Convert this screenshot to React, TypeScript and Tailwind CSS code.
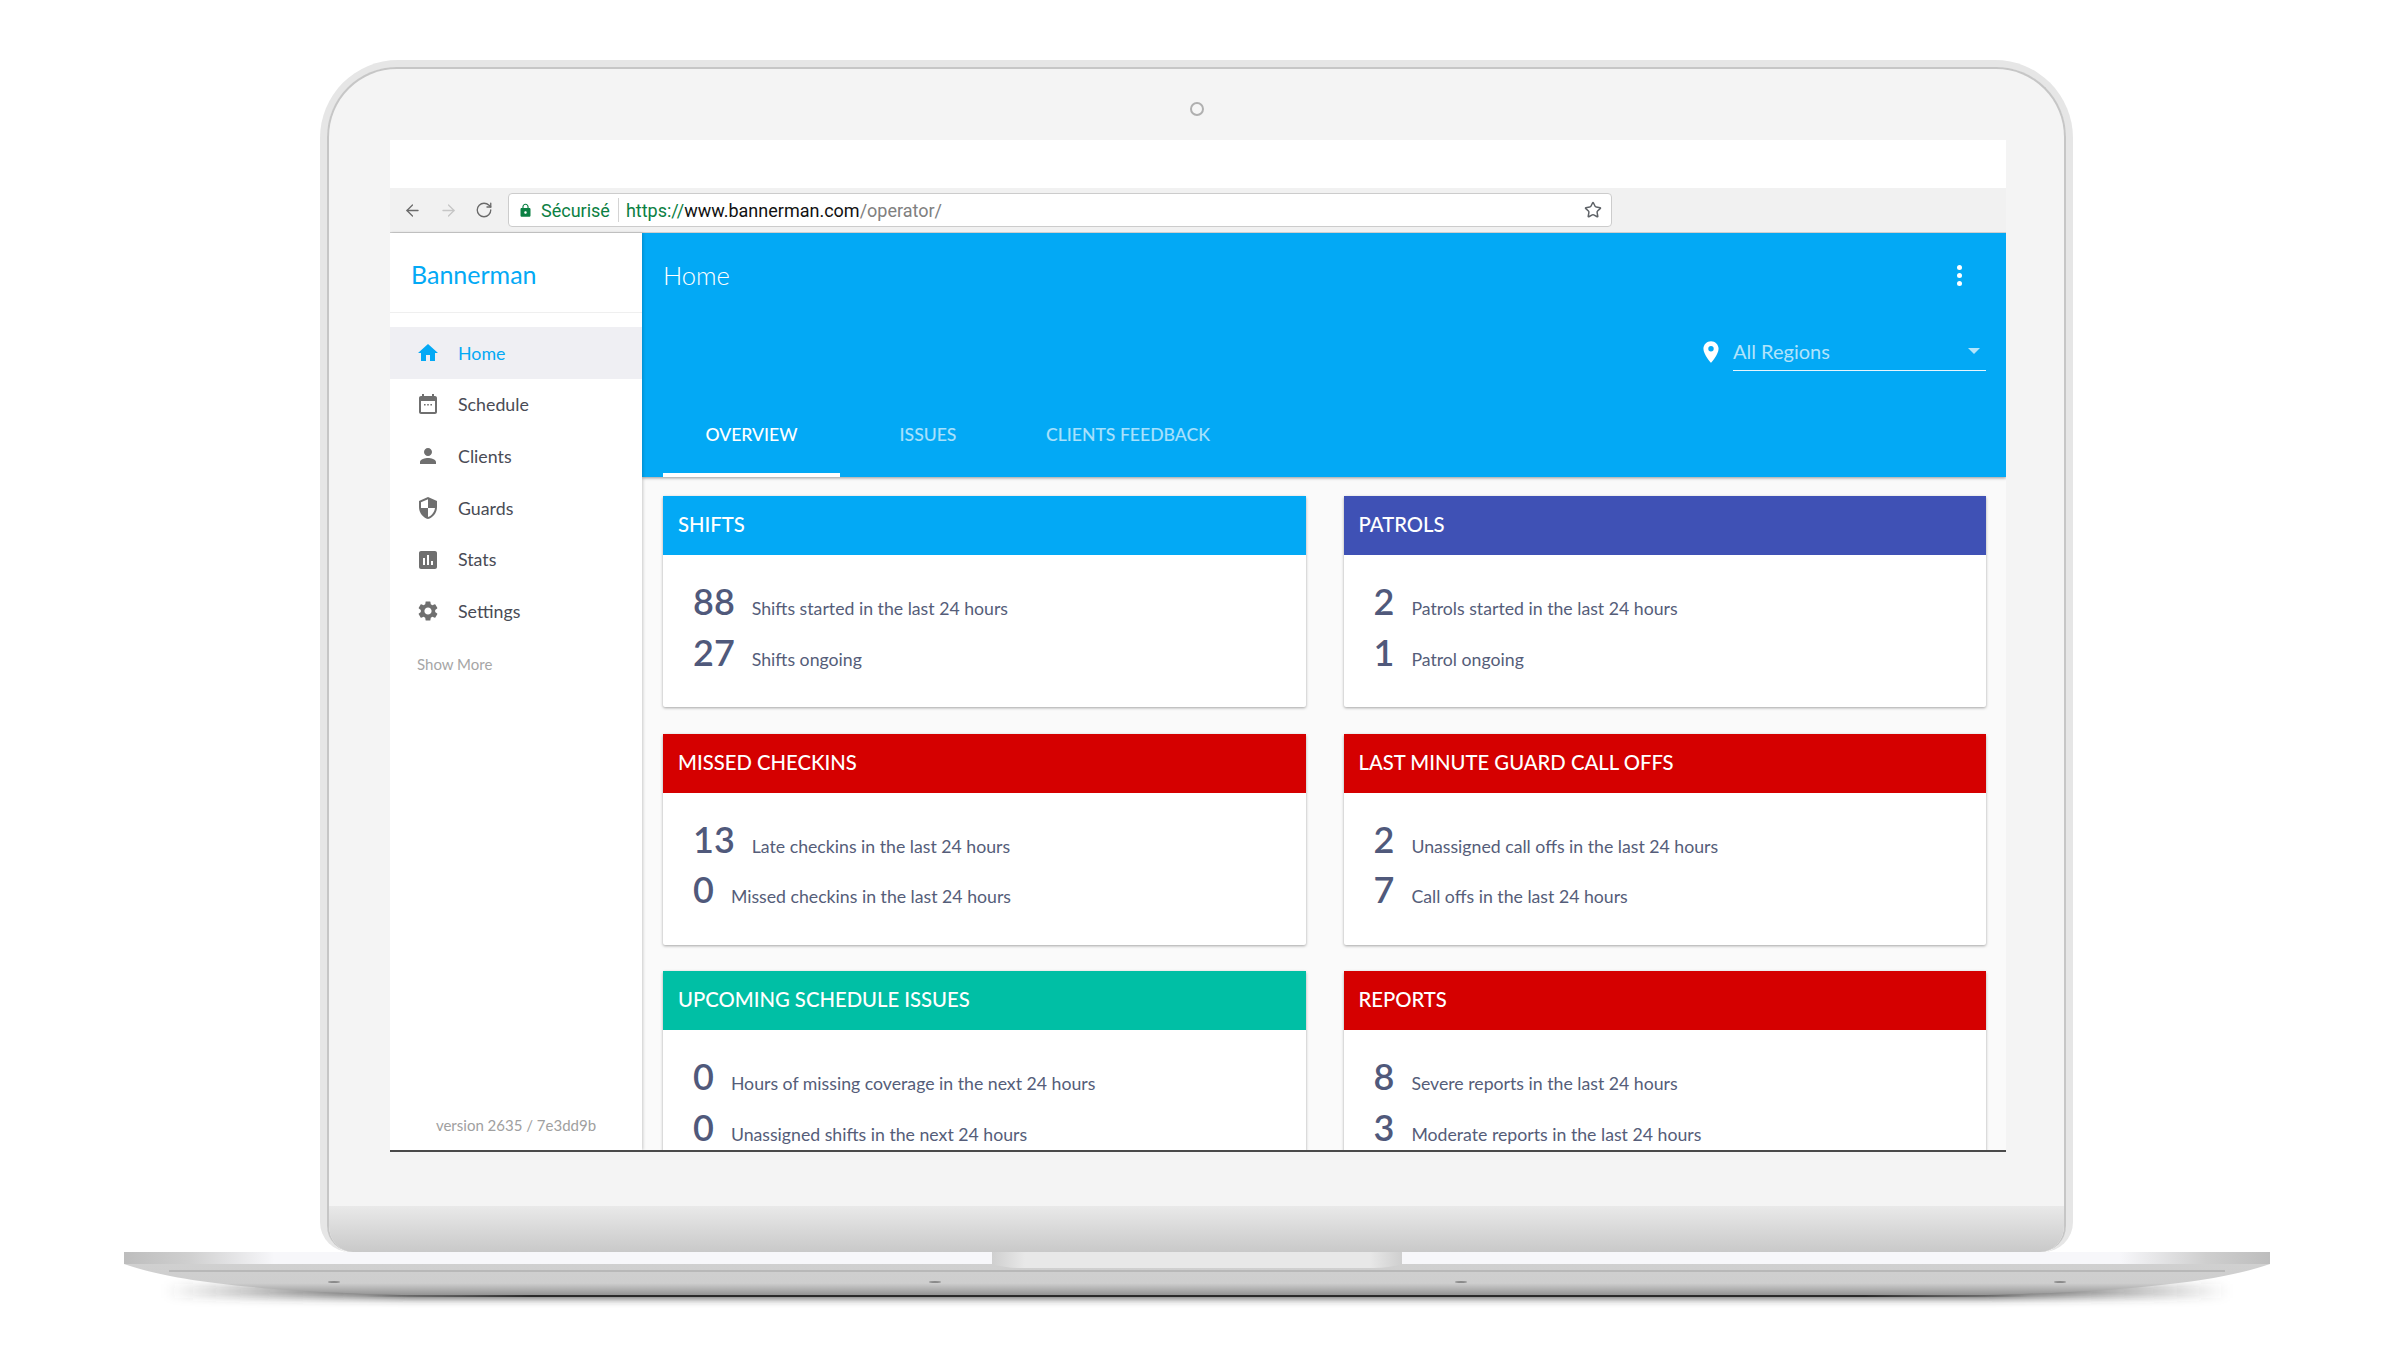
import React from 'react';
import { ArrowLeft, ArrowRight, RotateCw, Star } from 'lucide-react';
import { MdHome, MdPerson, MdSecurity, MdAssessment, MdSettings, MdPlace, MdLock } from 'react-icons/md';

const CalendarIcon = () => (
  <svg viewBox="0 0 24 24" className="w-6 h-6 fill-current">
    <path d="M19 3h-1V1h-2v2H8V1H6v2H5c-1.1 0-2 .9-2 2v14c0 1.1.9 2 2 2h14c1.1 0 2-.9 2-2V5c0-1.1-.9-2-2-2zm0 16H5V8h14v11z" />
    <path d="M8 11h1.6v1.6H8zM11.2 11h1.6v1.6h-1.6zM14.4 11H16v1.6h-1.6z" />
  </svg>
);

const navItems = [
  { label: 'Home', icon: <MdHome className="w-6 h-6" />, active: true },
  { label: 'Schedule', icon: <CalendarIcon /> },
  { label: 'Clients', icon: <MdPerson className="w-6 h-6" /> },
  { label: 'Guards', icon: <MdSecurity className="w-6 h-6" /> },
  { label: 'Stats', icon: <MdAssessment className="w-6 h-6" /> },
  { label: 'Settings', icon: <MdSettings className="w-6 h-6" /> },
];

const cards = [
  { title: 'SHIFTS', color: 'bg-[#03a9f5]', rows: [['88', 'Shifts started in the last 24 hours'], ['27', 'Shifts ongoing']] },
  { title: 'PATROLS', color: 'bg-[#3f51b5]', rows: [['2', 'Patrols started in the last 24 hours'], ['1', 'Patrol ongoing']] },
  { title: 'MISSED CHECKINS', color: 'bg-[#d50000]', rows: [['13', 'Late checkins in the last 24 hours'], ['0', 'Missed checkins in the last 24 hours']] },
  { title: 'LAST MINUTE GUARD CALL OFFS', color: 'bg-[#d50000]', rows: [['2', 'Unassigned call offs in the last 24 hours'], ['7', 'Call offs in the last 24 hours']] },
  { title: 'UPCOMING SCHEDULE ISSUES', color: 'bg-[#00bfa5]', rows: [['0', 'Hours of missing coverage in the next 24 hours'], ['0', 'Unassigned shifts in the next 24 hours']] },
  { title: 'REPORTS', color: 'bg-[#d50000]', rows: [['8', 'Severe reports in the last 24 hours'], ['3', 'Moderate reports in the last 24 hours']] },
];

const BrowserBar = () => (
  <div className="h-[45px] shrink-0 bg-[#f1f1f1] border-b border-[#cfcfcf] flex items-center pl-[13px]">
    <ArrowLeft className="w-[19px] h-[19px] text-[#6a6a6a]" strokeWidth={1.6} />
    <ArrowRight className="w-[19px] h-[19px] text-[#c6c6c6] ml-[17px]" strokeWidth={1.6} />
    <RotateCw className="w-[18px] h-[18px] text-[#6a6a6a] ml-[17px]" strokeWidth={1.8} />
    <div className="ml-[15px] w-[1104px] h-[34px] bg-white border border-[#cccccc] rounded-[4px] flex items-center pl-[9px] pr-[9px] font-['Roboto',sans-serif] text-[18px]">
      <MdLock className="w-[15px] h-[15px] text-[#0b8043]" />
      <span className="ml-[8px] text-[#0b8043]">Sécurisé</span>
      <span className="ml-[8px] w-px h-[24px] bg-[#d4d4d4]" />
      <span className="ml-[7px] text-[#0b8043]">https://</span>
      <span className="text-[#111111]">www.bannerman.com</span>
      <span className="text-[#808080]">/operator/</span>
      <Star className="ml-auto w-[18px] h-[18px] text-[#5f6368]" strokeWidth={2} />
    </div>
  </div>
);

const Sidebar = () => (
  <aside className="w-[252px] shrink-0 bg-white flex flex-col relative z-10 shadow-[1px_0_3px_rgba(0,0,0,0.2)]">
    <div className="h-[80px] shrink-0 border-b border-[#efefef] flex items-center pl-[21px] pt-[4px] text-[25px] text-[#03a9f5]">Bannerman</div>
    <nav className="mt-[14px]">
      {navItems.map((item) => (
        <div
          key={item.label}
          className={`h-[51.7px] flex items-center pl-[26px] gap-[18px] text-[17.8px] ${item.active ? 'bg-[#efeff3] text-[#03a9f5]' : 'text-[#494b55]'}`}
        >
          <span className={item.active ? 'text-[#03a9f5]' : 'text-[#6f6f6f]'}>{item.icon}</span>
          {item.label}
        </div>
      ))}
    </nav>
    <div className="mt-[17px] pl-[27px] text-[15px] leading-[20px] text-[#a6a6a6]">Show More</div>
    <div className="mt-auto pb-[15px] text-center text-[15px] leading-[20px] text-[#a0a0a0]">version 2635 / 7e3dd9b</div>
  </aside>
);

const Header = () => (
  <header className="h-[244px] shrink-0 bg-[#03a9f5] text-white pl-[21px] pr-[20px] shadow-[0_1px_3px_rgba(0,0,0,0.4)] relative z-[5]">
    <div className="h-[84px] flex items-center justify-between pr-[24px]">
      <span className="text-[25.5px] font-light">Home</span>
      <div className="flex flex-col gap-[3px]">
        <span className="w-[5px] h-[5px] rounded-full bg-white" />
        <span className="w-[5px] h-[5px] rounded-full bg-white" />
        <span className="w-[5px] h-[5px] rounded-full bg-white" />
      </div>
    </div>
    <div className="h-[79px] pt-[17px] flex items-start justify-end">
      <MdPlace className="w-[26px] h-[28px] mr-[9px] mt-[4px]" />
      <div className="w-[253px] h-[37px] pb-[3px] border-b border-white/90 flex items-center justify-between pr-[6px] text-[20px] text-white/70">
        All Regions
        <span className="w-0 h-0 border-x-[6px] border-x-transparent border-t-[6px] border-t-white/70" />
      </div>
    </div>
    <div className="flex h-[81px] text-[17.6px] font-medium">
      <div className="w-[177px] flex items-center justify-center pt-[2px] border-b-4 border-white">OVERVIEW</div>
      <div className="w-[176px] flex items-center justify-center pt-[2px] border-b-4 border-transparent text-white/65">ISSUES</div>
      <div className="w-[224px] flex items-center justify-center pt-[2px] border-b-4 border-transparent text-white/65">CLIENTS FEEDBACK</div>
    </div>
  </header>
);

const Card = ({ title, color, rows }: { title: string; color: string; rows: string[][] }) => (
  <section className="h-[211px] bg-white rounded-[2px] shadow-[0_1px_3px_rgba(0,0,0,0.35)]">
    <div className={`h-[59px] ${color} text-white text-[20.3px] font-medium flex items-center pl-[15px] pb-[2px]`}>{title}</div>
    <div className="pt-[21px] pl-[30px]">
      {rows.map(([n, text]) => (
        <div key={text} className="h-[50.5px] flex items-baseline gap-[17px] text-[#555d79]">
          <span className="text-[36px] leading-[50px] font-semibold text-[#50597b]">{n}</span>
          <span className="text-[17.7px]">{text}</span>
        </div>
      ))}
    </div>
  </section>
);

const LaptopBase = () => (
  <svg viewBox="0 0 2146 60" className="ml-[124px] block w-[2146px] h-[60px]">
    <defs>
      <linearGradient id="strip" x1="0" x2="1" y1="0" y2="0">
        <stop offset="0" stopColor="#bdbdbd" />
        <stop offset="0.03" stopColor="#cfcfcf" />
        <stop offset="0.07" stopColor="#f7f7fa" />
        <stop offset="0.93" stopColor="#f7f7fa" />
        <stop offset="0.97" stopColor="#cfcfcf" />
        <stop offset="1" stopColor="#bdbdbd" />
      </linearGradient>
      <linearGradient id="body" x1="0" x2="0" y1="0" y2="1">
        <stop offset="0" stopColor="#d0d0d0" />
        <stop offset="0.6" stopColor="#cecece" />
        <stop offset="1" stopColor="#8f8f8f" />
      </linearGradient>
      <linearGradient id="notch" x1="0" x2="1" y1="0" y2="0">
        <stop offset="0" stopColor="#cfcfcf" />
        <stop offset="0.08" stopColor="#e8e8e8" />
        <stop offset="0.92" stopColor="#e8e8e8" />
        <stop offset="1" stopColor="#cfcfcf" />
      </linearGradient>
      <linearGradient id="shade" gradientUnits="userSpaceOnUse" x1="40" x2="2106" y1="0" y2="0">
        <stop offset="0" stopColor="#444444" stopOpacity="0" />
        <stop offset="0.12" stopColor="#333333" stopOpacity="0.9" />
        <stop offset="0.88" stopColor="#333333" stopOpacity="0.9" />
        <stop offset="1" stopColor="#444444" stopOpacity="0" />
      </linearGradient>
      <linearGradient id="edge" gradientUnits="userSpaceOnUse" x1="240" x2="1906" y1="0" y2="0">
        <stop offset="0" stopColor="#111111" stopOpacity="0" />
        <stop offset="0.1" stopColor="#111111" />
        <stop offset="0.9" stopColor="#111111" />
        <stop offset="1" stopColor="#111111" stopOpacity="0" />
      </linearGradient>
      <filter id="blur" x="-5%" y="-200%" width="110%" height="500%">
        <feGaussianBlur stdDeviation="4.5" />
      </filter>
    </defs>
    <rect x="40" y="32" width="2066" height="14" fill="url(#shade)" filter="url(#blur)" />
    <path d="M0 12 C50 30 150 42 340 44 L1806 44 C1996 42 2096 30 2146 12 Z" fill="url(#body)" />
    <rect x="240" y="43.2" width="1666" height="1.6" fill="url(#edge)" />
    <path d="M45 19 L2101 19" stroke="#b0b0b0" strokeWidth="1.5" />
    <rect x="0" y="0" width="2146" height="12" fill="url(#strip)" />
    <path d="M868 0 H1278 V12 Q1265 16 1250 16 H896 Q881 16 868 12 Z" fill="url(#notch)" />
    <ellipse cx="210" cy="30" rx="6" ry="1" fill="#8a8a8a" />
    <ellipse cx="811" cy="30" rx="6" ry="1" fill="#8a8a8a" />
    <ellipse cx="1337" cy="30" rx="6" ry="1" fill="#8a8a8a" />
    <ellipse cx="1936" cy="30" rx="6" ry="1" fill="#8a8a8a" />
  </svg>
);

export default function App() {
  return (
    <div className="w-[2404px] h-[1364px] overflow-hidden bg-white pt-[60px] font-['Lato',sans-serif]">
      <div className="ml-[320px] w-[1753px] h-[1192px] rounded-t-[78px] rounded-b-[30px] border-[7px] border-b-0 border-[#e6e6e6]">
        <div className="h-full rounded-t-[70px] rounded-b-[26px] border-2 border-b-0 border-[#c6c6c6] bg-[#f4f4f4] flex flex-col overflow-hidden">
          <div className="h-[71px] shrink-0 flex items-center justify-center pt-[8px]">
            <span className="w-[14px] h-[14px] rounded-full border-2 border-[#b0b0b0] bg-[#f6f6f6]" />
          </div>
          <div className="ml-[61px] mr-[58px] h-[1012px] shrink-0 bg-white border-b-2 border-[#4a4a4a] flex flex-col overflow-hidden">
            <div className="h-[48px] shrink-0 bg-white" />
            <BrowserBar />
            <div className="flex-1 min-h-0 flex">
              <Sidebar />
              <main className="flex-1 min-w-0 bg-[#fafafa] flex flex-col overflow-hidden">
                <Header />
                <div className="pt-[19px] pl-[21px] pr-[20px] grid grid-cols-2 gap-x-[38px] gap-y-[26.5px]">
                  {cards.map((card) => (
                    <Card key={card.title} {...card} />
                  ))}
                </div>
              </main>
            </div>
          </div>
          <div className="mt-[54px] flex-1 bg-gradient-to-b from-[#e9e9e9] to-[#c9c9c9]" />
        </div>
      </div>
      <LaptopBase />
    </div>
  );
}
